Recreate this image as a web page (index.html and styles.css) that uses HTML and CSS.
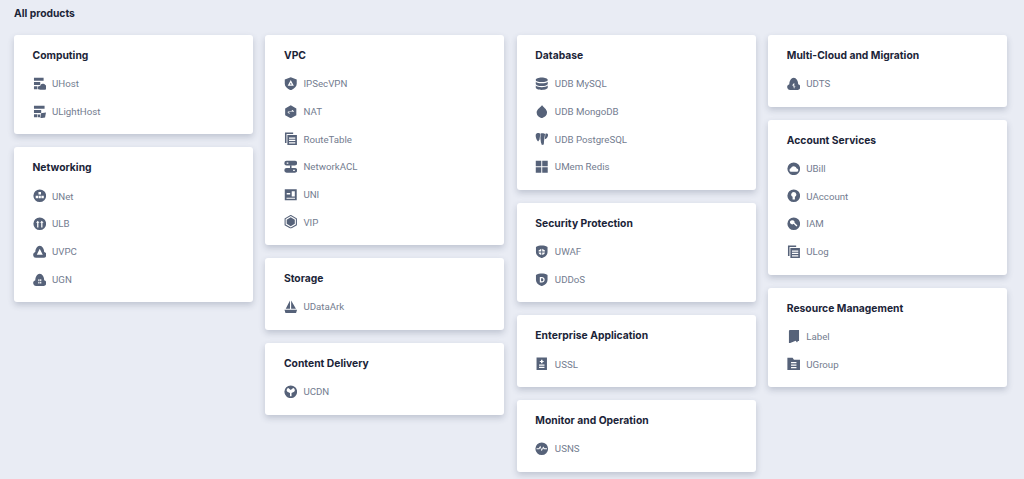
FILE: index.html
```html
<!DOCTYPE html>
<html lang="en">
<head>
<meta charset="utf-8">
<title>All products</title>
<link rel="stylesheet" href="styles.css">
</head>
<body>
<svg class="defs" width="0" height="0" aria-hidden="true">
<symbol id="i-uhost" viewBox="0 0 14 14"><path d="M1 .8h10v3H1zM1 5.200h6.500v3H1zM1 9.600h3.600v3H1zM5.200 9.800h1.500v2.800H5.200z"/><path d="M7.700 13.200a2.100 2.100 0 0 1-.2-4.200 2.900 2.900 0 0 1 5.300-.6 2.500 2.500 0 0 1-.3 4.800z"/></symbol>
<symbol id="i-ulight" viewBox="0 0 14 14"><path d="M1 .8h11v3H1zM1 5.200h7.500v3H1zM1 9.600h3.600v3H1zM5.200 9.800h2.200v2.800H5.200z"/><path d="M8.200 8.600l5.300-.9-1 5.300-4.800.7z"/></symbol>
<symbol id="i-unet" viewBox="0 0 14 14"><path fill-rule="evenodd" d="M7 .4a6.600 6.600 0 1 1 0 13.200A6.600 6.600 0 0 1 7 .4zM5.700 3.200v2.400h2.600V3.200zM2.800 7v2.500h2.500V7zM5.900 7v2.500h2.200V7zM8.700 7v2.500h2.500V7z"/></symbol>
<symbol id="i-ulb" viewBox="0 0 14 14"><path fill-rule="evenodd" d="M7 .4a6.600 6.600 0 1 1 0 13.200A6.600 6.600 0 0 1 7 .4zM4.900 3.800L3.100 6h1.200v4.800h1.300V6h1.200zM9.100 3.800L7.300 6h1.200v4.800h1.300V6h1.200z"/></symbol>
<symbol id="i-uvpc" viewBox="0 0 14 14"><path fill-rule="evenodd" d="M3 13.200A3 3 0 0 1 2.400 7.300C2.400 4 4.400 .8 7 .8s4.600 3.200 4.600 6.500A3 3 0 0 1 11 13.200zM7 3.800L3.900 10.200h6.200z"/></symbol>
<symbol id="i-ugn" viewBox="0 0 14 14"><path fill-rule="evenodd" d="M3 13.400A3 3 0 0 1 2.400 7.500C2.400 4 4.400 .8 7 .8s4.600 3.200 4.600 6.700A3 3 0 0 1 11 13.400zM5.500 6.600v1.800h1.200V6.600zM7.400 6.600v1.800h1.200V6.600zM5.500 9.200v1.800h1.200V9.200zM7.400 9.200v1.800h1.200V9.200z"/></symbol>
<symbol id="i-ipsec" viewBox="0 0 14 14"><path fill-rule="evenodd" d="M7 .2l6.200 2.400v4.500c0 3.100-2.800 5.300-6.200 6.700-3.400-1.400-6.200-3.600-6.200-6.700V2.600zM7 3.200L3.800 9.200h6.400zM7 6l1 1.900H6z"/></symbol>
<symbol id="i-nat" viewBox="0 0 14 14"><path fill-rule="evenodd" d="M7 .2l5.800 3.300v7L7 13.800 1.200 10.500v-7zM4 6.500h4.900L7.600 5.200H9L10.600 7.100H4zM10 7.600H5.100l1.300 1.300H5L3.400 7.600z"/></symbol>
<symbol id="i-route" viewBox="0 0 14 14"><path d="M1 .6h8.500v1.600H2.600V11.500H1z"/><path fill-rule="evenodd" d="M3.500 3.200H13.400V13.600H3.500zM5.200 5.600v1.300h6.500V5.600zM5.200 8.100v1.300h6.500V8.100zM5.200 10.600v1.300h6.500v-1.300z"/></symbol>
<symbol id="i-acl" viewBox="0 0 14 14"><path fill-rule="evenodd" d="M2.700 .9h8.600a2.300 2.300 0 0 1 0 4.800H2.700a2.300 2.300 0 0 1 0-4.800zM2.800 2.600v1.400h1.700V2.600zM2.700 8.300h8.600a2.300 2.300 0 0 1 0 4.800H2.700a2.300 2.300 0 0 1 0-4.800zM9.500 10v1.400h1.700V10z"/><path d="M6.200 5.500h1.600v3H6.200z"/></symbol>
<symbol id="i-uni" viewBox="0 0 14 14"><path fill-rule="evenodd" d="M.8 1.400h12.400v11.200H.8zM2.800 5.300v1.500h3.600V5.300zM8 3.400v5.400h3.200V3.400zM2.600 10.200v.9h8.800v-.9z"/></symbol>
<symbol id="i-vip" viewBox="0 0 14 14"><path fill-rule="evenodd" d="M7-.2l6.400 3.700v7L7 14.200 .6 10.500v-7zM7 1.100L1.700 4.100v5.800L7 12.900l5.300-3V4.100z"/><path d="M7 2.400l4.200 2.400v4.400L7 11.600 2.800 9.200V4.800z"/></symbol>
<symbol id="i-ark" viewBox="0 0 14 14"><path d="M6.200 .4v8.800H1.800zM7.400 .4l5 8.800h-5zM.5 10.200h13l-1 3.400H1.500z"/></symbol>
<symbol id="i-ucdn" viewBox="0 0 14 14"><path fill-rule="evenodd" d="M7 .4a6.600 6.600 0 1 1 0 13.200A6.600 6.600 0 0 1 7 .4zM4.500 3.200A2.300 2.300 0 0 0 3.500 7.100l2.700 1.300v3.300h1.600V8.400l2.700-1.300a2.300 2.300 0 0 0-1-3.900L7 5.200z"/></symbol>
<symbol id="i-mysql" viewBox="0 0 14 14"><path d="M7 .6c3.400 0 6.200 1 6.200 2.400S10.400 5.300 7 5.300.8 4.400.8 3 3.600.6 7 .6zM.8 4.800C1.900 5.800 4.300 6.400 7 6.400s5.100-.6 6.200-1.600V7c0 1.300-2.800 2.400-6.200 2.400S.8 8.300.8 7zM.8 8.900c1.100 1 3.500 1.600 6.200 1.600s5.100-.6 6.200-1.600V11c0 1.400-2.800 2.400-6.200 2.400S.8 12.400.8 11z"/></symbol>
<symbol id="i-mongo" viewBox="0 0 14 14"><path d="M7.300 0c.7 1.900 5.200 4.200 5.200 7.900 0 3-2.400 4.800-4.500 5.200l-.6.900h-.9l-.6-.9C3.900 12.700 1.700 10.900 1.700 7.900 1.700 4.200 6.600 1.900 7.300 0z"/></symbol>
<symbol id="i-pg" viewBox="0 0 14 14"><path d="M.8 2.500C1.800 1 4.300.7 5.600 1.800L4.600 8 3.200 9.800C1.300 8.300.3 4 .8 2.500zM6 1.500C7 1 9.500 1 10.500 2L9.600 6.800 9.100 13 7.100 13.400 6.100 10.600 5.600 6.300zM10.900 1.700C12.200 1.200 13.700 1.800 13.600 3.200 13.500 5 12 7.400 10.100 7.600z"/></symbol>
<symbol id="i-redis" viewBox="0 0 14 14"><path d="M.8.800h5.700v5.700H.8zM7.500.8h5.700v5.700H7.500zM.8 7.500h5.700v5.700H.8zM7.500 7.500h5.700v5.700H7.500z"/></symbol>
<symbol id="i-waf" viewBox="0 0 14 14"><path fill-rule="evenodd" d="M1 2C2.900 1 4.900.6 7 .6s4.100.4 6 1.400v5.300c0 3.200-2.600 5.200-6 6.300-3.400-1.100-6-3.100-6-6.300zM3.700 5.800v1h2.800V4zM7.500 4v2.800h2.800v-1zM3.700 7.800c.2 1.100.9 2 2.800 2.600V7.800zM7.500 7.800v2.600c1.900-.6 2.600-1.500 2.800-2.600z"/></symbol>
<symbol id="i-ddos" viewBox="0 0 14 14"><path fill-rule="evenodd" d="M1 2C2.900 1 4.900.6 7 .6s4.100.4 6 1.400v5.300c0 3.200-2.600 5.200-6 6.300-3.400-1.100-6-3.100-6-6.300zM5 4.200v5.600h2.100c1.700 0 2.900-1.100 2.900-2.800S8.800 4.200 7.100 4.200zM6.300 5.400h.8c1 0 1.600.6 1.600 1.600S8.100 8.600 7.100 8.600h-.8z"/></symbol>
<symbol id="i-ssl" viewBox="0 0 14 14"><path fill-rule="evenodd" d="M1.600.4h10.800v13.200H1.600zM6.200 2.800v1.300H5v1.100h1.200v1.300h1.600V5.200H9V4.100H7.800V2.800zM4.200 7.800v1.200h5.600V7.800zM4.200 10.100v1.200h5.600v-1.200z"/></symbol>
<symbol id="i-sns" viewBox="0 0 14 14"><path fill-rule="evenodd" d="M7 .4a6.600 6.600 0 1 1 0 13.200A6.600 6.600 0 0 1 7 .4zM1.600 6.500v1.100h2.900l1-1.800 1.400 3.900 1.500-3.100.7 1h3.300V6.500H9.900L8.500 4.700 7 7.900 5.500 3.800 3.900 6.500z"/></symbol>
<symbol id="i-udts" viewBox="0 0 14 14"><path fill-rule="evenodd" d="M3 13.400A3 3 0 0 1 2.400 7.500C2.400 4 4.400 .8 7 .8s4.600 3.200 4.600 6.700A3 3 0 0 1 11 13.400zM7.500 6L5.200 8.700h1.500v2.300h1zM6.900 11.600h1V9.500h1z"/></symbol>
<symbol id="i-ubill" viewBox="0 0 14 14"><path fill-rule="evenodd" d="M7 .4a6.600 6.600 0 1 1 0 13.200A6.600 6.600 0 0 1 7 .4zM4.200 10.200h5.700a1.700 1.700 0 0 0 .2-3.400 3.200 3.200 0 0 0-6.100-.3 1.900 1.900 0 0 0 .2 3.700z"/></symbol>
<symbol id="i-uacc" viewBox="0 0 14 14"><path fill-rule="evenodd" d="M7 .4a6.600 6.600 0 1 1 0 13.200A6.600 6.600 0 0 1 7 .4zM7 3a2.700 2.700 0 0 0-1.200 5.100v2.700h2.400V8.100A2.700 2.700 0 0 0 7 3z"/></symbol>
<symbol id="i-iam" viewBox="0 0 14 14"><path fill-rule="evenodd" d="M7 .4a6.600 6.600 0 1 1 0 13.200A6.600 6.600 0 0 1 7 .4zM5.300 3.300a2.200 2.200 0 1 0 1.500 3.800l3 2.800 1-1.100-3-2.800a2.200 2.200 0 0 0-2.500-2.700z"/></symbol>
<symbol id="i-label" viewBox="0 0 14 14"><path d="M2 1.300C2 .6 2.600 0 3.300 0H12.500v11.500H11.300L10.400 13 9 11.200 2 14z"/></symbol>
<symbol id="i-group" viewBox="0 0 14 14"><path fill-rule="evenodd" d="M.4.800h5.400l1.400 2h6.400v10.800H.4zM4.200 5.300v1.300h5.600V5.300zM4.200 7.800v1.300h5.600V7.800zM4.200 10.300v1.300h5.600v-1.300z"/></symbol>
</svg>
<main class="page">
<h1 class="heading">All products</h1>
<div class="columns">
<div class="column">
<section class="card"><h2 class="title">Computing</h2>
<a class="item"><svg class="ico"><use href="#i-uhost"/></svg>UHost</a>
<a class="item"><svg class="ico"><use href="#i-ulight"/></svg>ULightHost</a></section>
<section class="card"><h2 class="title">Networking</h2>
<a class="item"><svg class="ico"><use href="#i-unet"/></svg>UNet</a>
<a class="item"><svg class="ico"><use href="#i-ulb"/></svg>ULB</a>
<a class="item"><svg class="ico"><use href="#i-uvpc"/></svg>UVPC</a>
<a class="item"><svg class="ico"><use href="#i-ugn"/></svg>UGN</a></section>
</div>
<div class="column">
<section class="card"><h2 class="title">VPC</h2>
<a class="item"><svg class="ico"><use href="#i-ipsec"/></svg>IPSecVPN</a>
<a class="item"><svg class="ico"><use href="#i-nat"/></svg>NAT</a>
<a class="item"><svg class="ico"><use href="#i-route"/></svg>RouteTable</a>
<a class="item"><svg class="ico"><use href="#i-acl"/></svg>NetworkACL</a>
<a class="item"><svg class="ico"><use href="#i-uni"/></svg>UNI</a>
<a class="item"><svg class="ico"><use href="#i-vip"/></svg>VIP</a></section>
<section class="card"><h2 class="title">Storage</h2>
<a class="item"><svg class="ico"><use href="#i-ark"/></svg>UDataArk</a></section>
<section class="card"><h2 class="title">Content Delivery</h2>
<a class="item"><svg class="ico"><use href="#i-ucdn"/></svg>UCDN</a></section>
</div>
<div class="column">
<section class="card"><h2 class="title">Database</h2>
<a class="item"><svg class="ico"><use href="#i-mysql"/></svg>UDB MySQL</a>
<a class="item"><svg class="ico"><use href="#i-mongo"/></svg>UDB MongoDB</a>
<a class="item"><svg class="ico"><use href="#i-pg"/></svg>UDB PostgreSQL</a>
<a class="item"><svg class="ico"><use href="#i-redis"/></svg>UMem Redis</a></section>
<section class="card"><h2 class="title">Security Protection</h2>
<a class="item"><svg class="ico"><use href="#i-waf"/></svg>UWAF</a>
<a class="item"><svg class="ico"><use href="#i-ddos"/></svg>UDDoS</a></section>
<section class="card"><h2 class="title">Enterprise Application</h2>
<a class="item"><svg class="ico"><use href="#i-ssl"/></svg>USSL</a></section>
<section class="card"><h2 class="title">Monitor and Operation</h2>
<a class="item"><svg class="ico"><use href="#i-sns"/></svg>USNS</a></section>
</div>
<div class="column">
<section class="card"><h2 class="title">Multi-Cloud and Migration</h2>
<a class="item"><svg class="ico"><use href="#i-udts"/></svg>UDTS</a></section>
<section class="card"><h2 class="title">Account Services</h2>
<a class="item"><svg class="ico"><use href="#i-ubill"/></svg>UBill</a>
<a class="item"><svg class="ico"><use href="#i-uacc"/></svg>UAccount</a>
<a class="item"><svg class="ico"><use href="#i-iam"/></svg>IAM</a>
<a class="item"><svg class="ico"><use href="#i-route"/></svg>ULog</a></section>
<section class="card"><h2 class="title">Resource Management</h2>
<a class="item"><svg class="ico"><use href="#i-label"/></svg>Label</a>
<a class="item"><svg class="ico"><use href="#i-group"/></svg>UGroup</a></section>
</div>
</div>
</main>
</body>
</html>
```
FILE: styles.css
```css
* { box-sizing: border-box; }
html, body { margin: 0; height: 100%; overflow: hidden; }
body { background: #e9ecf4; font-family: Inter, "Liberation Sans", sans-serif; }
.defs { position: absolute; }
.page { padding: 7px 17px 0 14px; }
.heading { margin: 0 0 15px; font-size: 10.3px; line-height: 13px; font-weight: 700; color: #1b2438; }
.columns { display: flex; gap: 12.67px; align-items: flex-start; }
.column { flex: 1 1 0; min-width: 0; display: flex; flex-direction: column; gap: 13px; }
.card {
  background: #fff;
  border-radius: 3px;
  padding: 13px 18.5px 9.2px;
  box-shadow: 0 3px 6px rgba(60, 70, 100, .24);
}
.title { margin: 0 0 6.9px; font-size: 10.3px; line-height: 15px; font-weight: 700; letter-spacing: .02px; color: #1b2438; }
.item {
  display: flex;
  align-items: center;
  height: 27.7px;
  font-family: Roboto, "Liberation Sans", sans-serif;
  font-size: 9.7px;
  color: #737c8f;
}
.ico { width: 13.5px; height: 13.5px; margin-right: 6px; fill: #566279; flex: none; }
```
